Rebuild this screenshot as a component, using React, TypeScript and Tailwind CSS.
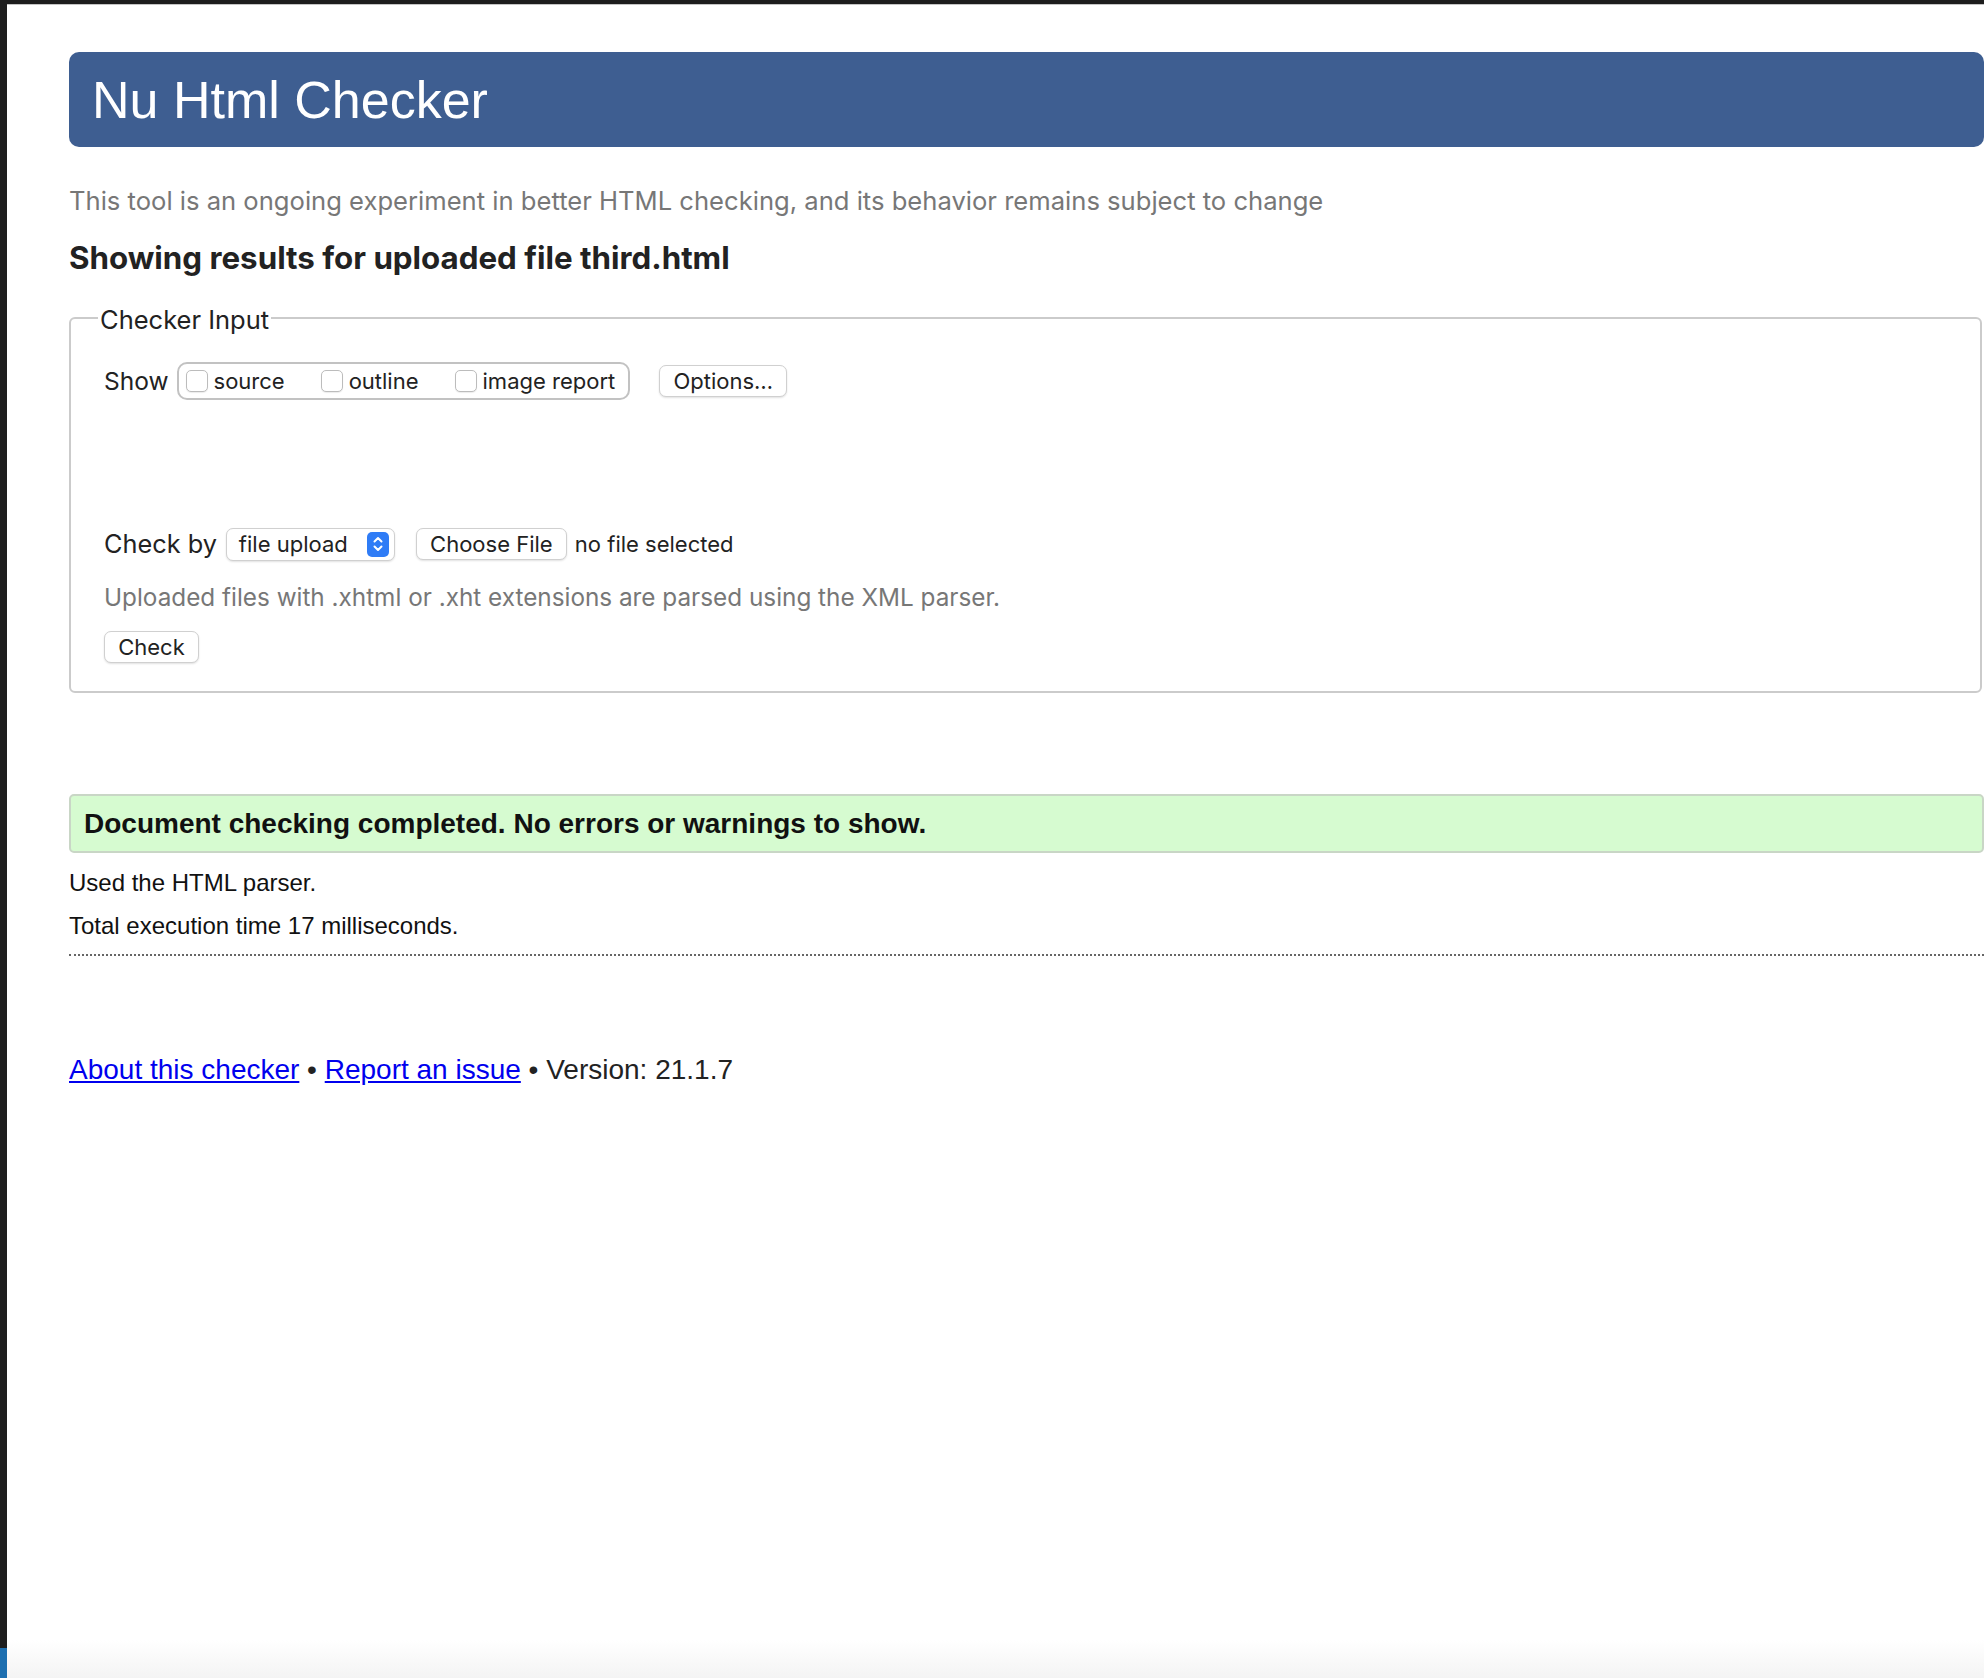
import React from "react";

const sysFont = "font-['Inter','Noto_Sans',sans-serif]";
const arialFont = "font-['Liberation_Sans',Arial,sans-serif]";

function Checkbox({ label }: { label: string }) {
  return (
    <label className="flex items-center gap-[6px]">
      <span className="h-[22px] w-[22px] rounded-[5px] border border-[#bcbcbc] bg-white shadow-[0_1px_1px_rgba(0,0,0,0.08)]" />
      <span className="text-[22px] leading-none text-[#222]">{label}</span>
    </label>
  );
}

function MacButton({ children, className = "" }: { children: React.ReactNode; className?: string }) {
  return (
    <button
      className={
        "flex h-[32px] items-center rounded-[7px] border border-[#d0d0d0] bg-white px-[12px] text-[22px] leading-none text-[#222] shadow-[0_1px_2px_rgba(0,0,0,0.12)] " +
        className
      }
    >
      {children}
    </button>
  );
}

export default function App() {
  return (
    <div className="flex min-h-[1678px] bg-white">
      {/* editor strip on the left edge */}
      <div className="flex w-[7px] flex-col bg-[#1e1e1e]">
        <div className="flex-1" />
        <div className="h-[30px] bg-[#1d6fb0]" />
      </div>

      <div className="flex flex-1 flex-col">
        <div className="h-[5px] border-b border-[#c4c4c4] bg-[#1d1d1d]" />

        <main className={"flex-1 pl-[62px] " + sysFont}>
          <h1 className="mt-[47px] flex h-[95px] items-center rounded-[10px] bg-[#3e5e91] pl-[23px]">
            <span className={"text-[52px] leading-[60px] font-normal text-white " + arialFont}>
              Nu Html Checker
            </span>
          </h1>

          <p className="mt-[38px] text-[25.6px] leading-[32px] text-[#777]">
            This tool is an ongoing experiment in better HTML checking, and its behavior remains subject to change
          </p>

          <h2 className="mt-[21px] text-[31.3px] leading-[40px] font-bold text-[#222]">
            Showing results for uploaded file third.html
          </h2>

          <fieldset className="mt-[23px] mr-[2px] rounded-[6px] border-2 border-[#cbcbcb] px-[27px] pt-[27px] pb-[28px]">
            <legend className="px-[2px] pt-[4px] text-[25.5px] leading-[30px] text-[#222]">Checker Input</legend>

            <div className="pl-[6px]">
              <div className="flex h-[38px] items-center">
                <span className="text-[24.5px] text-[#222]">Show</span>
                <div className="ml-[8px] flex h-[38px] items-center gap-[36px] rounded-[10px] border-2 border-[#c2c2c2] pr-[13px] pl-[7px]">
                  <Checkbox label="source" />
                  <Checkbox label="outline" />
                  <Checkbox label="image report" />
                </div>
                <MacButton className="ml-[29px] w-[128px] justify-center">Options…</MacButton>
              </div>

              <div className="mt-[127px] flex h-[34px] items-center">
                <span className="text-[25.3px] text-[#222]">Check by</span>
                <div className="ml-[9px] flex h-[33px] w-[169px] items-center justify-between rounded-[7px] border border-[#d0d0d0] bg-white pr-[5px] pl-[12px] shadow-[0_1px_2px_rgba(0,0,0,0.12)]">
                  <span className="text-[22px] leading-none text-[#222]">file upload</span>
                  <span className="flex h-[25px] w-[22px] items-center justify-center rounded-[5px] bg-[#2f7cf6]">
                    <svg width="12" height="18" viewBox="0 0 12 18" fill="none" stroke="white" strokeWidth="2" strokeLinecap="round" strokeLinejoin="round">
                      <path d="M2.5 6.5 6 3l3.5 3.5" />
                      <path d="M2.5 11.5 6 15l3.5-3.5" />
                    </svg>
                  </span>
                </div>
                <MacButton className="ml-[21px] w-[151px] justify-center">Choose File</MacButton>
                <span className="ml-[8px] text-[22px] text-[#222]">no file selected</span>
              </div>

              <p className="mt-[21px] text-[24.3px] leading-[30px] text-[#777]">
                Uploaded files with .xhtml or .xht extensions are parsed using the XML parser.
              </p>

              <MacButton className="mt-[19px] w-[95px] justify-center">Check</MacButton>
            </div>
          </fieldset>

          <div className={arialFont}>
            <div className="mt-[101px] flex h-[59px] items-center rounded-[5px] border-2 border-[#c9d6c6] bg-[#d6fbd0] pl-[13px]">
              <span className="text-[28px] font-bold text-[#111]">
                Document checking completed. No errors or warnings to show.
              </span>
            </div>

            <p className="mt-[15px] text-[24px] leading-[30px] text-[#111]">Used the HTML parser.</p>
            <p className="mt-[13px] text-[24px] leading-[30px] text-[#111]">Total execution time 17 milliseconds.</p>

            <div className="mt-[13px] border-b-2 border-dotted border-[#666]" />

            <p className="mt-[97px] text-[28px] leading-[34px] text-[#222]">
              <a href="#" className="text-[#0000ee] underline">About this checker</a>
              {" • "}
              <a href="#" className="text-[#0000ee] underline">Report an issue</a>
              {" • Version: 21.1.7"}
            </p>
          </div>
        </main>

        <div className="h-[38px] bg-gradient-to-b from-white to-[#f4f4f4]" />
      </div>
    </div>
  );
}
